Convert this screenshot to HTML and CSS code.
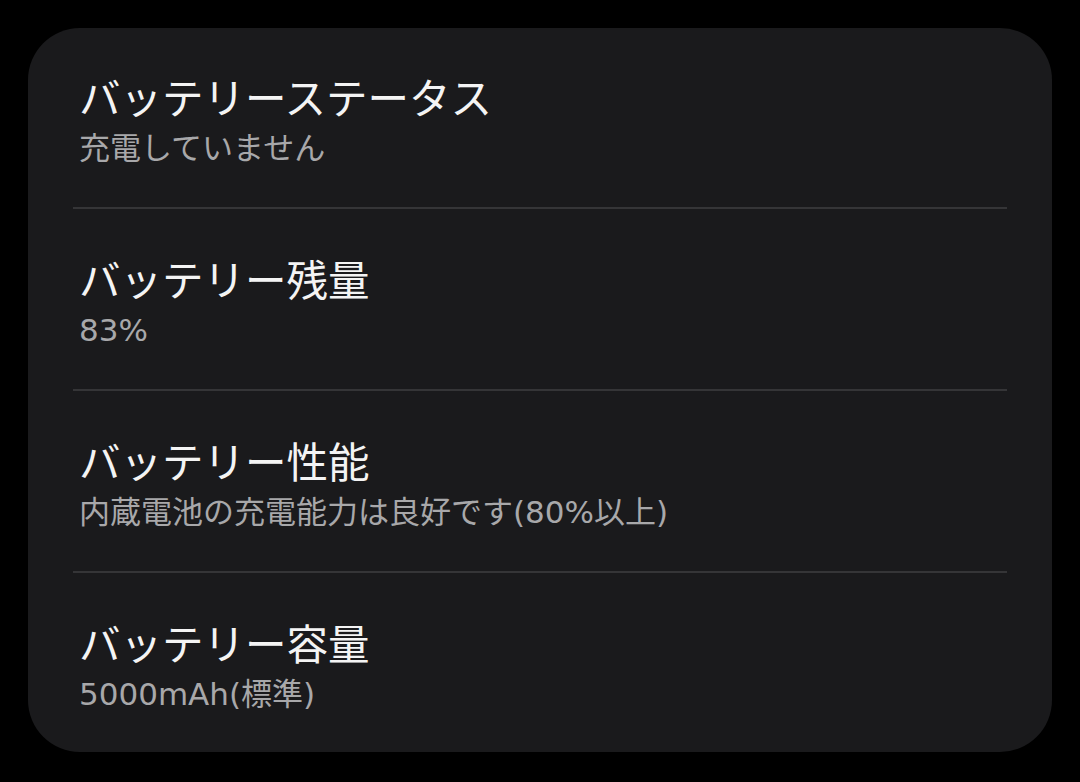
FILE: index.html
```html
<!DOCTYPE html>
<html lang="ja">
<head>
<meta charset="utf-8">
<link rel="stylesheet" href="styles.css">
</head>
<body>
<div class="card">
  <div class="row">
    <div class="title">バッテリーステータス</div>
    <div class="sub">充電していません</div>
  </div>
  <div class="row">
    <div class="title">バッテリー残量</div>
    <div class="sub">83%</div>
  </div>
  <div class="row">
    <div class="title">バッテリー性能</div>
    <div class="sub">内蔵電池の充電能力は良好です(80%以上)</div>
  </div>
  <div class="row">
    <div class="title">バッテリー容量</div>
    <div class="sub">5000mAh(標準)</div>
  </div>
</div>
</body>
</html>
```
FILE: styles.css
```css
html, body {
  margin: 0;
  padding: 0;
  background: #000;
  width: 1080px;
  height: 782px;
  overflow: hidden;
}
body {
  font-family: "Noto Sans CJK JP", "Noto Sans", sans-serif;
  padding: 28px;
  box-sizing: border-box;
}
.card {
  width: 1024px;
  height: 724px;
  box-sizing: border-box;
  background: #1a1a1c;
  border-radius: 52px;
  padding: 44px 45px 0 45px;
  display: flex;
  flex-direction: column;
}
.row {
  padding: 45px 0 39px 6px;
  border-top: 2px solid #353537;
  display: flex;
  flex-direction: column;
  gap: 8px;
}
.row:first-child {
  padding-top: 0;
  border-top: none;
}
.title {
  font-size: 41.5px;
  line-height: 48px;
  color: #f4f4f4;
}
.sub {
  font-family: "DejaVu Sans", "Noto Sans CJK JP", sans-serif;
  font-size: 31px;
  line-height: 40px;
  color: #a8a8aa;
}
```
